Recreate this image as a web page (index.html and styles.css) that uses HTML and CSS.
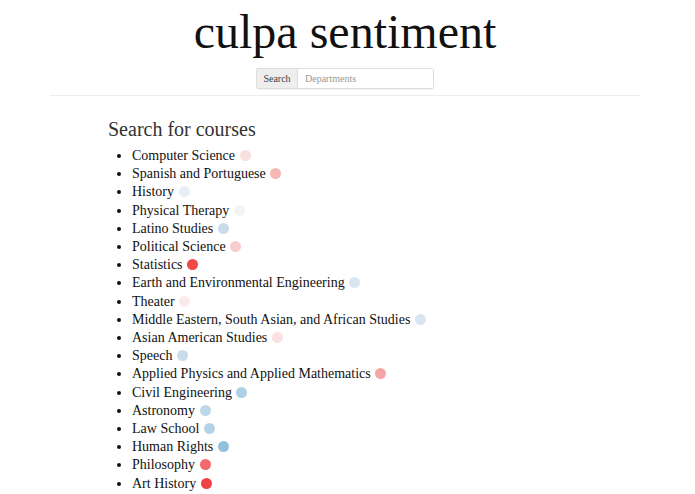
FILE: index.html
```html
<!DOCTYPE html>
<html lang="en">
<head>
    <meta charset="UTF-8">
    <meta name="viewport" content="width=device-width, initial-scale=1.0">
    <title>culpa sentiment</title>
    <link rel="stylesheet" href="styles.css">
</head>
<body>
    <div id="container">
        <h1 class="title">culpa sentiment</h1>
        <div class="search-group">
            <span class="search-label">Search</span>
            <input class="search-input" type="text" placeholder="Departments">
        </div>
        <hr class="divider">

        <div id="courses">
            <h3 class="heading">Search for courses</h3>
            <ul class="dept-list">
                <li>Computer Science <span class="dot" style="background-color: #f9dfdf"></span></li>
                <li>Spanish and Portuguese <span class="dot" style="background-color: #f6b6b6"></span></li>
                <li>History <span class="dot" style="background-color: #e9eff6"></span></li>
                <li>Physical Therapy <span class="dot" style="background-color: #f4f4f5"></span></li>
                <li>Latino Studies <span class="dot" style="background-color: #c8dcec"></span></li>
                <li>Political Science <span class="dot" style="background-color: #f7cdcd"></span></li>
                <li>Statistics <span class="dot" style="background-color: #ef4848"></span></li>
                <li>Earth and Environmental Engineering <span class="dot" style="background-color: #d9e6f1"></span></li>
                <li>Theater <span class="dot" style="background-color: #fbeaea"></span></li>
                <li>Middle Eastern, South Asian, and African Studies <span class="dot" style="background-color: #d9e6f1"></span></li>
                <li>Asian American Studies <span class="dot" style="background-color: #fae2e2"></span></li>
                <li>Speech <span class="dot" style="background-color: #c8dcec"></span></li>
                <li>Applied Physics and Applied Mathematics <span class="dot" style="background-color: #f5a5a5"></span></li>
                <li>Civil Engineering <span class="dot" style="background-color: #add0e6"></span></li>
                <li>Astronomy <span class="dot" style="background-color: #bdd8ea"></span></li>
                <li>Law School <span class="dot" style="background-color: #b4d3e8"></span></li>
                <li>Human Rights <span class="dot" style="background-color: #93c0dd"></span></li>
                <li>Philosophy <span class="dot" style="background-color: #f26a6a"></span></li>
                <li>Art History <span class="dot" style="background-color: #ef4242"></span></li>
            </ul>
        </div>
    </div>
</body>
</html>
```

FILE: styles.css
```css
body {
    margin: 0;
    background-color: white;
    font-family: Georgia, "Liberation Serif", serif;
    color: #222;
}

#container {
    width: 590px;
    margin-left: 50px;
}

.title {
    font-size: 48px;
    font-weight: normal;
    line-height: 53px;
    text-align: center;
    color: #111;
    margin: 5px 0 10px 0;
}

.search-group {
    display: flex;
    width: 178px;
    height: 21px;
    margin: 0 auto;
    border: 1px solid #ddd;
    border-radius: 2px;
    box-sizing: border-box;
    box-shadow: 0 1px 1px rgba(0, 0, 0, 0.05);
}

.search-label {
    width: 40px;
    background-color: #eee;
    border-right: 1px solid #ddd;
    font-size: 10px;
    line-height: 19px;
    text-align: center;
    color: #444;
}

.search-input {
    flex: 1;
    min-width: 0;
    border: 0px;
    padding: 0 7px;
    font-family: Georgia, "Liberation Serif", serif;
    font-size: 10px;
    color: #555;
    outline: none;
}

.search-input::placeholder {
    color: #999;
}

.divider {
    border: 0px;
    border-top: 1px solid #eee;
    margin: 6px 0 0 0;
}

#courses {
    padding-left: 58px;
}

.heading {
    font-size: 20px;
    font-weight: normal;
    color: #333;
    line-height: 22px;
    margin: 22px 0 7px 0;
}

.dept-list {
    margin: 0;
    padding-left: 24px;
    font-size: 14px;
    line-height: 18.2px;
    color: #111;
}

.dot {
    display: inline-block;
    width: 11px;
    height: 11px;
    border-radius: 50%;
    margin-left: 1px;
    vertical-align: -1px;
}
```
